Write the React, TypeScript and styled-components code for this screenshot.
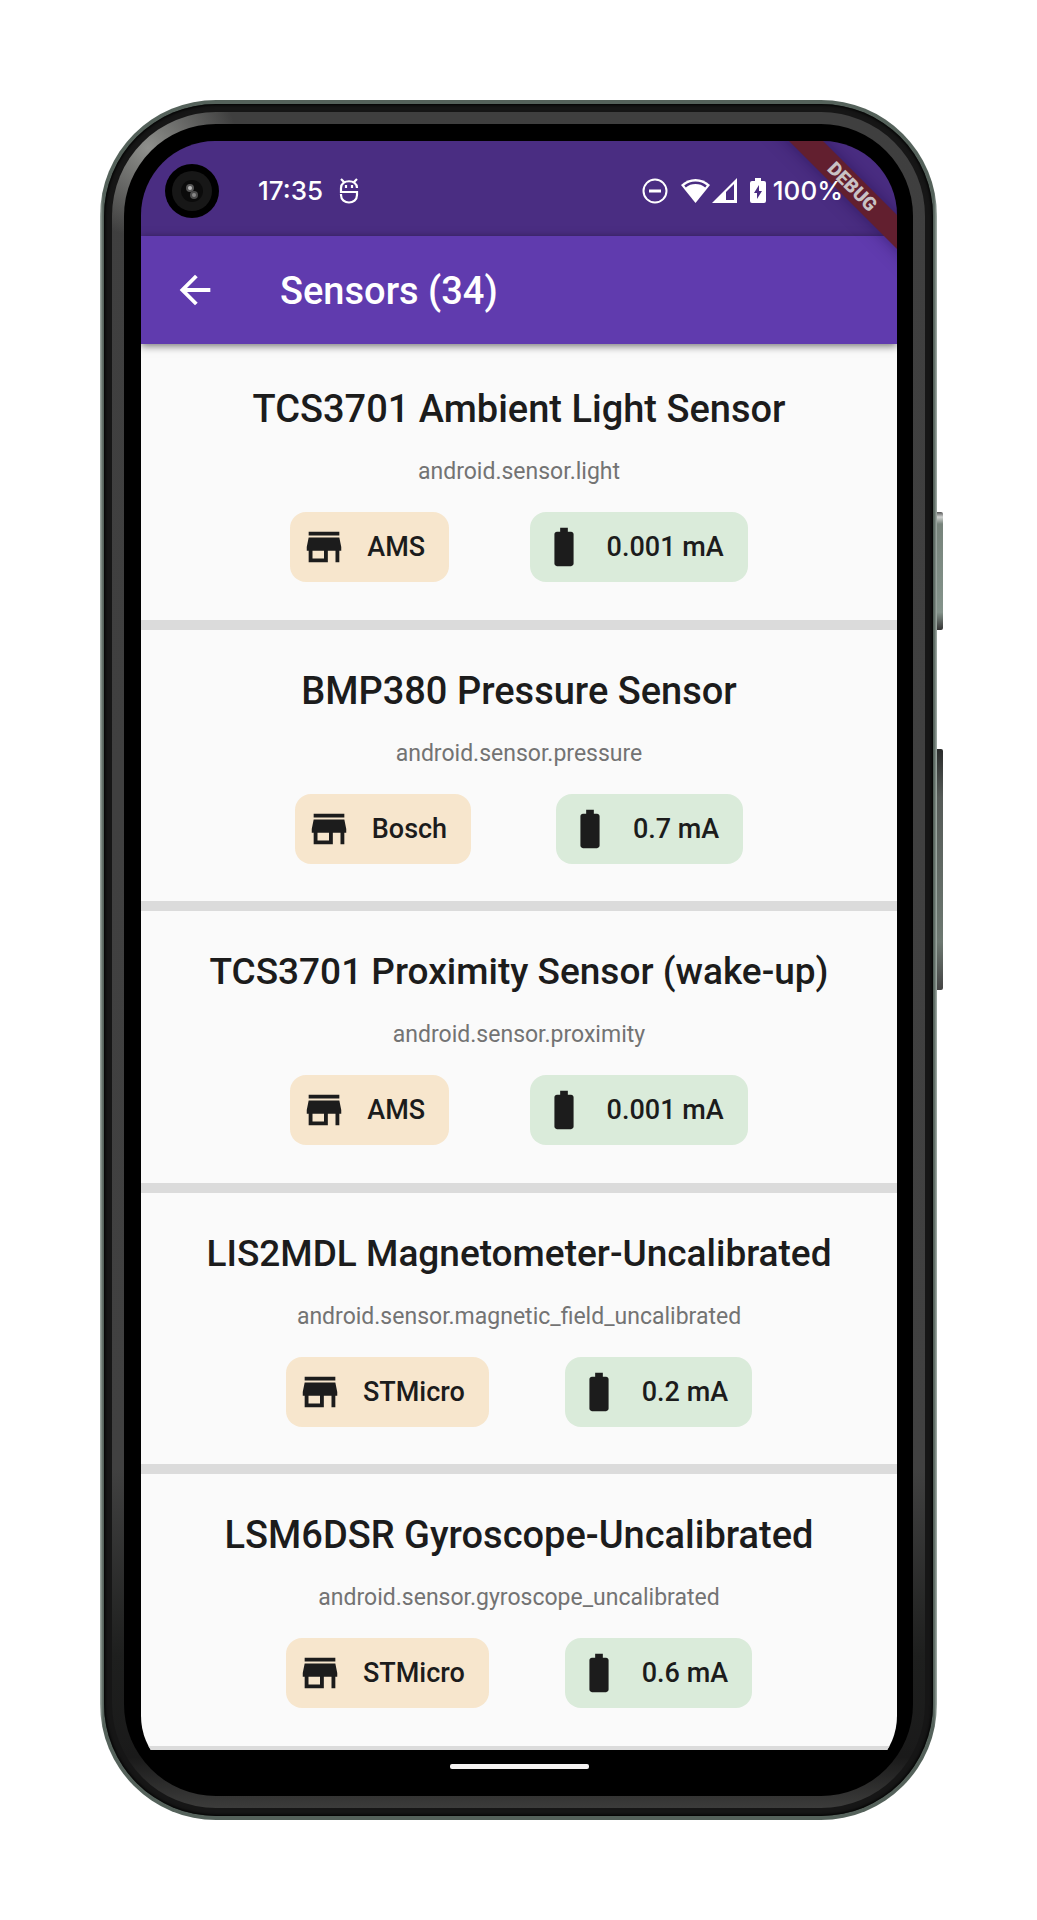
import React from "react";
import styled, { createGlobalStyle } from "styled-components";

const GlobalStyle = createGlobalStyle`
  * { box-sizing: border-box; }
  body { margin: 0; background: #fff; font-family: Roboto, "Liberation Sans", sans-serif; }
`;

const Stage = styled.main`
  display: flex;
  height: 100vh;
  min-height: 1400px;
  padding: 100px;
`;

const Phone = styled.div`
  position: relative;
  display: flex;
  flex: 1;
  border-radius: 116px;
  padding: 4px;
  background: linear-gradient(90deg, #a5b0aa 0, #55625b 3px, #55625b calc(100% - 3px), #a5b0aa 100%);
`;

const Rim = styled.div`
  display: flex;
  flex: 1;
  padding: 8px;
  border-radius: 112px;
  background: #161616;
  box-shadow: inset 0 0 3px 1px #000;
`;

const Band = styled.div`
  display: flex;
  flex: 1;
  padding: 12px;
  border-radius: 104px;
  background:
    radial-gradient(circle at 36px 36px, #90918e 0, #7c7d7a 20px, transparent 90px),
    linear-gradient(#3f3f3f 0, #414141 80%, #1e1f1e 91%, #1a1a1a 97%, #3c3c3b 100%);
`;

const Bezel = styled.div`
  display: flex;
  flex: 1;
  padding: 17px 16px 16px 17px;
  border-radius: 92px;
  background: #000;
`;

const Screen = styled.div`
  position: relative;
  display: flex;
  flex: 1;
  min-width: 0;
  flex-direction: column;
  overflow: hidden;
  border-radius: 74px 74px 64px 64px;
  background: #000;
`;

const SideKey = styled.span<{ $top: number; $height: number; $shade: string }>`
  position: absolute;
  left: 100%;
  top: ${(p) => p.$top}px;
  width: 6px;
  height: ${(p) => p.$height}px;
  border-radius: 0 2px 2px 0;
  background: ${(p) => p.$shade};
`;

const StatusBar = styled.div`
  display: flex;
  flex: none;
  align-items: center;
  height: 95px;
  padding: 4px 54px 0 24px;
  background: #4a2d82;
  color: #fff;
  font: 500 26px/32px Inter, sans-serif;
`;

const Camera = styled.svg`
  width: 54px;
  height: 54px;
  margin-right: 39px;
`;

const Clock = styled.time`
  margin-right: 16px;
`;

const StatusIcons = styled.div`
  position: relative;
  z-index: 2;
  display: flex;
  align-items: center;
  margin-left: auto;
`;

const StatusIcon = styled.svg<{ $gap: number }>`
  margin-right: ${(p) => p.$gap}px;
`;

const AppBar = styled.header`
  position: relative;
  display: flex;
  flex: none;
  align-items: center;
  height: 108px;
  padding: 0 31px;
  background: #603bae;
  box-shadow: 0 2px 8px rgba(0, 0, 0, 0.55);
  color: #fff;
`;

const BackButton = styled.button`
  display: flex;
  padding: 0;
  border: 0;
  background: none;
  color: inherit;
  margin-right: 62px;
`;

const Heading = styled.h1`
  margin: 0;
  padding-top: 2px;
  font-size: 38px;
  line-height: 46px;
  font-weight: 500;
`;

const SensorList = styled.ul`
  display: flex;
  flex: 1;
  flex-direction: column;
  margin: 0;
  padding: 4px 0 0;
  list-style: none;
  background: #fafafa;
`;

const SensorItem = styled.li`
  display: flex;
  flex: 1 0 auto;
  flex-direction: column;
  align-items: center;
  padding-top: 38px;
  border-bottom: 10px solid #dbdbdb;
  &:last-child { border-bottom-width: 4px; }
`;

const SensorName = styled.h2<{ $long: boolean }>`
  margin: 0 0 26px;
  color: #1c1c1c;
  font-size: ${(p) => (p.$long ? 37 : 38)}px;
  line-height: 46px;
  font-weight: 500;
`;

const SensorType = styled.p`
  margin: 0 0 26px;
  color: #737373;
  font-size: 23px;
  line-height: 28px;
`;

const Chips = styled.div`
  display: flex;
  align-self: stretch;
  justify-content: space-evenly;
  padding: 0 69px;
  margin-bottom: 30px;
`;

const Chip = styled.span<{ $tint: string }>`
  display: flex;
  align-items: center;
  gap: 20px;
  height: 70px;
  padding: 0 24px 0 11px;
  border-radius: 16px;
  background: ${(p) => p.$tint};
  color: #1c1c1c;
  font-size: 27px;
  line-height: 32px;
  font-weight: 500;
`;

const NavBar = styled.div`
  display: flex;
  flex: none;
  justify-content: center;
  height: 30px;
  padding-top: 14px;
  background: #000;
`;

const HomeHandle = styled.span`
  width: 139px;
  height: 5px;
  border-radius: 2px;
  background: #f5f3f2;
`;

const DebugRibbon = styled.div`
  position: absolute;
  top: 34px;
  right: -65px;
  width: 220px;
  height: 24px;
  transform: rotate(45deg);
  background: #621f2f;
  box-shadow: 0 0 16px rgba(30, 10, 70, 0.5);
  color: #c9c2c4;
  font-size: 19px;
  line-height: 24px;
  font-weight: 900;
  text-align: center;
`;

const StoreIcon = () => (
  <svg width="46" height="46" viewBox="0 0 24 24" fill="#1c1c1c" aria-hidden="true">
    <path d="M20 4H4v2h16V4zm1 10v-2l-1-5H4l-1 5v2h1v6h10v-6h4v6h2v-6h1zm-9 4H6v-4h6v4z" />
  </svg>
);

const BatteryIcon = () => (
  <svg width="46" height="46" viewBox="0 0 24 24" fill="#1c1c1c" aria-hidden="true">
    <path d="M15.67 4H14V2h-4v2H8.33C7.6 4 7 4.6 7 5.33v15.33C7 21.4 7.6 22 8.33 22h7.33c.74 0 1.34-.6 1.34-1.33V5.33C17 4.6 16.4 4 15.67 4z" />
  </svg>
);

const sensors = [
  { name: "TCS3701 Ambient Light Sensor", type: "android.sensor.light", vendor: "AMS", power: "0.001 mA" },
  { name: "BMP380 Pressure Sensor", type: "android.sensor.pressure", vendor: "Bosch", power: "0.7 mA" },
  { name: "TCS3701 Proximity Sensor (wake-up)", type: "android.sensor.proximity", vendor: "AMS", power: "0.001 mA" },
  { name: "LIS2MDL Magnetometer-Uncalibrated", type: "android.sensor.magnetic_field_uncalibrated", vendor: "STMicro", power: "0.2 mA" },
  { name: "LSM6DSR Gyroscope-Uncalibrated", type: "android.sensor.gyroscope_uncalibrated", vendor: "STMicro", power: "0.6 mA" },
];

export default function App() {
  return (
    <Stage>
      <GlobalStyle />
      <Phone>
        <SideKey $top={412} $height={118} $shade="linear-gradient(#555 0, #d0d3d1 5px, #77837b 12px, #84938b 85%, #333 100%)" />
        <SideKey $top={649} $height={241} $shade="linear-gradient(#2a2c2b 0, #555a57 20%, #6d7871 80%, #444 100%)" />
        <Rim>
          <Band>
            <Bezel>
              <Screen>
                <StatusBar>
                  <Camera viewBox="0 0 54 54" aria-hidden="true">
                    <circle cx="27" cy="27" r="27" fill="#000" />
                    <circle cx="27" cy="27" r="20" fill="#171717" />
                    <circle cx="27" cy="27" r="11" fill="#0b0b0b" />
                    <circle cx="25" cy="24" r="4" fill="#555" />
                    <circle cx="29" cy="31" r="4" fill="#4c4c4c" />
                    <circle cx="29" cy="31" r="2" fill="#888" />
                    <circle cx="25" cy="24" r="2" fill="#bbb" />
                  </Camera>
                  <Clock>17:35</Clock>
                  <svg width="20" height="26" viewBox="0 0 20 26" fill="none" stroke="#fff" strokeWidth="2.2" aria-hidden="true">
                    <path d="M2 1l3 3M18 1l-3 3M18 10c0-9-16-9-16 0v4h16v3c0 10-16 10-16 0v-1" />
                    <path d="M7 7v3M13 7v3" />
                  </svg>
                  <StatusIcons>
                    <StatusIcon $gap={13} width="26" height="26" viewBox="0 0 26 26" fill="none" stroke="#fff" strokeWidth="2" aria-hidden="true">
                      <circle cx="13" cy="13" r="11.500" />
                      <path d="M7 13h12" strokeWidth="3" />
                    </StatusIcon>
                    <StatusIcon $gap={2} width="29" height="25" viewBox="0 0 29 25" fill="#fff" aria-hidden="true">
                      <path d="M0 7C8-1 21-1 29 7L14.500 25z" />
                      <path d="M4 8.500c6-5 15-5 21 0" fill="none" stroke="#4a2d82" strokeWidth="2.500" />
                    </StatusIcon>
                    <StatusIcon $gap={13} width="25" height="25" viewBox="0 0 25 25" aria-hidden="true">
                      <path d="M0 25L25 0v25z" fill="#fff" />
                      <path d="M14 14l8-8v16h-8z" fill="#4a2d82" />
                    </StatusIcon>
                    <StatusIcon $gap={7} width="16" height="25" viewBox="0 0 16 25" aria-hidden="true">
                      <path d="M5 0h6v3h3q2 0 2 2v18q0 2-2 2H2q-2 0-2-2V5q0-2 2-2h3z" fill="#fff" />
                      <path d="M9 7L4 15h3v6l5-8H9z" fill="#4a2d82" />
                    </StatusIcon>
                    <span>100%</span>
                  </StatusIcons>
                </StatusBar>
                <AppBar>
                  <BackButton aria-label="Back">
                    <svg width="46" height="46" viewBox="0 0 24 24" fill="currentColor" aria-hidden="true">
                      <path d="M20 11H7.830l5.590-5.590L12 4l-8 8 8 8 1.410-1.410L7.830 13H20v-2z" />
                    </svg>
                  </BackButton>
                  <Heading>Sensors (34)</Heading>
                </AppBar>
                <SensorList>
                  {sensors.map((s) => (
                    <SensorItem key={s.name}>
                      <SensorName $long={s.name.length > 32}>{s.name}</SensorName>
                      <SensorType>{s.type}</SensorType>
                      <Chips>
                        <Chip $tint="#f7e6cd"><StoreIcon />{s.vendor}</Chip>
                        <Chip $tint="#daebda"><BatteryIcon />{s.power}</Chip>
                      </Chips>
                    </SensorItem>
                  ))}
                </SensorList>
                <NavBar><HomeHandle /></NavBar>
                <DebugRibbon>DEBUG</DebugRibbon>
              </Screen>
            </Bezel>
          </Band>
        </Rim>
      </Phone>
    </Stage>
  );
}
